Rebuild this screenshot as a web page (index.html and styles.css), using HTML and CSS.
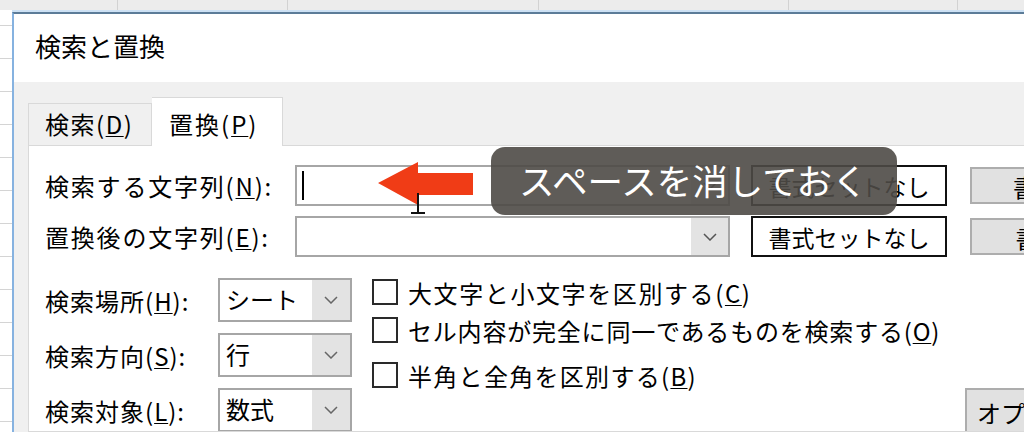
FILE: index.html
```html
<!DOCTYPE html>
<html lang="ja">
<head>
  <meta charset="UTF-8"/>
  <title>検索と置換</title>
  <link rel="stylesheet" href="styles.css">
</head>
<body>

<div class="dialog">
  <div class="titlebar">検索と置換</div>

  <div class="dialog-body">
    <!-- Tabs -->
    <div class="tabs">
      <div class="tab">検索(<u>D</u>)</div>
      <div class="tab active">置換(<u>P</u>)</div>
    </div>

    <div class="panel">
      <!-- Find / replace rows -->
      <div class="field-row">
        <label class="field-label">検索する文字列(<u>N</u>):</label>
        <div class="combo">
          <span class="caret"></span>
          <span class="combo-btn"><svg width="14" height="8" viewBox="0 0 14 8"><polyline points="1,1 7,7 13,1" fill="none" stroke="#555" stroke-width="1.5"/></svg></span>
        </div>
        <button class="fmt-btn">書式セットなし</button>
        <button class="side-btn">書式(<u>M</u>)...</button>
      </div>
      <div class="field-row">
        <label class="field-label">置換後の文字列(<u>E</u>):</label>
        <div class="combo">
          <span class="combo-btn"><svg width="14" height="8" viewBox="0 0 14 8"><polyline points="1,1 7,7 13,1" fill="none" stroke="#555" stroke-width="1.5"/></svg></span>
        </div>
        <button class="fmt-btn">書式セットなし</button>
        <button class="side-btn">書式(<u>A</u>)...</button>
      </div>

      <!-- Options -->
      <div class="options">
        <div class="selects">
          <label class="opt-label">検索場所(<u>H</u>):</label>
          <div class="select"><span class="select-val">シート</span><span class="select-btn"><svg width="14" height="8" viewBox="0 0 14 8"><polyline points="1,1 7,7 13,1" fill="none" stroke="#666" stroke-width="1.5"/></svg></span></div>
          <label class="opt-label">検索方向(<u>S</u>):</label>
          <div class="select"><span class="select-val">行</span><span class="select-btn"><svg width="14" height="8" viewBox="0 0 14 8"><polyline points="1,1 7,7 13,1" fill="none" stroke="#666" stroke-width="1.5"/></svg></span></div>
          <label class="opt-label">検索対象(<u>L</u>):</label>
          <div class="select"><span class="select-val">数式</span><span class="select-btn"><svg width="14" height="8" viewBox="0 0 14 8"><polyline points="1,1 7,7 13,1" fill="none" stroke="#666" stroke-width="1.5"/></svg></span></div>
        </div>

        <div class="checks">
          <div class="check case"><span class="box"></span>大文字と小文字を区別する(<u>C</u>)</div>
          <div class="check whole"><span class="box"></span>セル内容が完全に同一であるものを検索する(<u>O</u>)</div>
          <div class="check width"><span class="box"></span>半角と全角を区別する(<u>B</u>)</div>
        </div>

        <button class="opt-btn">オプション(<u>T</u>) &lt;&lt;</button>
      </div>
    </div>
  </div>
</div>

<!-- Annotation overlay -->
<svg class="arrow" width="100" height="48" viewBox="0 0 100 48">
  <polygon points="2,23 42,2 42,13 97,13 97,35 42,35 42,45" fill="#f03c16"/>
</svg>
<svg class="ibeam" width="18" height="22" viewBox="0 0 18 22">
  <path d="M9 0 V19 M2 20 H16" stroke="#111" stroke-width="2" fill="none"/>
</svg>
<div class="tooltip">スペースを消しておく</div>

</body>
</html>
```

FILE: styles.css
```css
*{margin:0;padding:0;box-sizing:border-box}
body{
  width:1024px;height:432px;overflow:hidden;position:relative;
  font-family:"Noto Sans CJK JP","Noto Sans",sans-serif;color:#000;
  background:
    linear-gradient(#d2d2d2,#d2d2d2) 117px 0/1px 100% no-repeat,
    linear-gradient(#d2d2d2,#d2d2d2) 287px 0/1px 100% no-repeat,
    linear-gradient(#d2d2d2,#d2d2d2) 538px 0/1px 100% no-repeat,
    linear-gradient(#d2d2d2,#d2d2d2) 788px 0/1px 100% no-repeat,
    linear-gradient(#d2d2d2,#d2d2d2) 957px 0/1px 100% no-repeat,
    linear-gradient(#ececec,#ececec) 0 0/100% 10px no-repeat,
    repeating-linear-gradient(to bottom,#fff 0 25px,#d4d4d4 25px 26px,#fff 26px 33px);
}
u{text-decoration:underline;text-underline-offset:2px;text-decoration-thickness:1px}
button{font-family:inherit;color:#000;cursor:default}

/* Dialog frame */
.dialog{
  margin:12px 0 0 12px;height:420px;
  border-left:2px solid #86b2e0;border-top:2px solid #5c7c98;
  box-shadow:0 -2px 0 #cde1f4;
  background:#f0f0f0;display:flex;flex-direction:column;
}
.titlebar{height:68px;flex-shrink:0;background:#fff;padding-left:21px;font-size:26px;line-height:64px}
.dialog-body{flex:1;min-height:0;padding-left:14px;display:flex;flex-direction:column}

/* Tabs */
.tabs{height:63px;flex-shrink:0;display:flex;align-items:flex-end}
.tab{
  width:124px;height:42px;padding-left:16px;
  border:1px solid #d9d9d9;border-bottom:none;background:#f0f0f0;
  font-size:24px;line-height:40px;letter-spacing:1.5px;
}
.tab.active{width:131px;height:49px;margin-bottom:-1px;padding:6px 0 0 17px;background:#fff;border-left:none;position:relative;z-index:1;letter-spacing:2px}

.panel{flex:1;min-height:0;overflow:hidden;background:#fff;border:1px solid #d9d9d9;border-right:none;padding:19px 0 0 16px}

/* Text rows */
.field-row{display:flex;align-items:center;height:41px;margin-bottom:10px}
.field-label{width:250px;flex-shrink:0;font-size:24px;letter-spacing:1.8px;white-space:nowrap}
.combo{width:435px;height:41px;flex-shrink:0;border:2px solid #a6a6a6;display:flex;align-items:center;padding-left:5px}
.caret{width:2px;height:29px;background:#000}
.combo-btn{margin-left:auto;width:37px;height:100%;background:#e3e3e3;display:flex;align-items:center;justify-content:center}
.fmt-btn{margin-left:21px;width:196px;height:41px;flex-shrink:0;background:#fff;border:2px solid #111;font-size:23px}
.side-btn{margin-left:23px;width:190px;height:37px;flex-shrink:0;background:#e1e1e1;border:2px solid #adadad;font-size:24px}

/* Options */
.options{display:flex;margin-top:21px}
.selects{display:grid;grid-template-columns:173px 134px;grid-auto-rows:44px;row-gap:11px;align-items:center;flex-shrink:0}
.opt-label{font-size:24px;letter-spacing:1px;white-space:nowrap}
.select{height:44px;border:2px solid #a6a6a6;display:flex;background:#fff}
.select-val{flex:1;padding-left:6px;font-size:24px;line-height:38px}
.select-btn{width:38px;background:#e3e3e3;display:flex;align-items:center;justify-content:center}

.checks{margin:-3px 0 0 20px;width:593px;flex-shrink:0}
.check{display:flex;align-items:center;height:34px;margin-bottom:4px;font-size:24px;white-space:nowrap}
.check.case{letter-spacing:1.6px}
.check.whole{letter-spacing:.8px}
.check.width{letter-spacing:1.3px;margin-top:11px}
.box{width:26px;height:26px;border:2px solid #2a2a2a;background:#fff;margin-right:10px;flex-shrink:0}

.opt-btn{margin-top:110px;width:200px;height:48px;flex-shrink:0;background:#e1e1e1;border:2px solid #adadad;font-size:24px;text-align:left;padding-left:10px}

/* Annotation overlay */
.arrow{position:absolute;left:376px;top:160px}
.ibeam{position:absolute;left:409px;top:193px}
.tooltip{
  position:absolute;left:491px;top:147px;width:406px;height:68px;
  border-radius:14px;background:rgba(78,74,70,.9);
  color:#fff;font-size:35.5px;line-height:66px;padding-left:28px;white-space:nowrap;
}
```
